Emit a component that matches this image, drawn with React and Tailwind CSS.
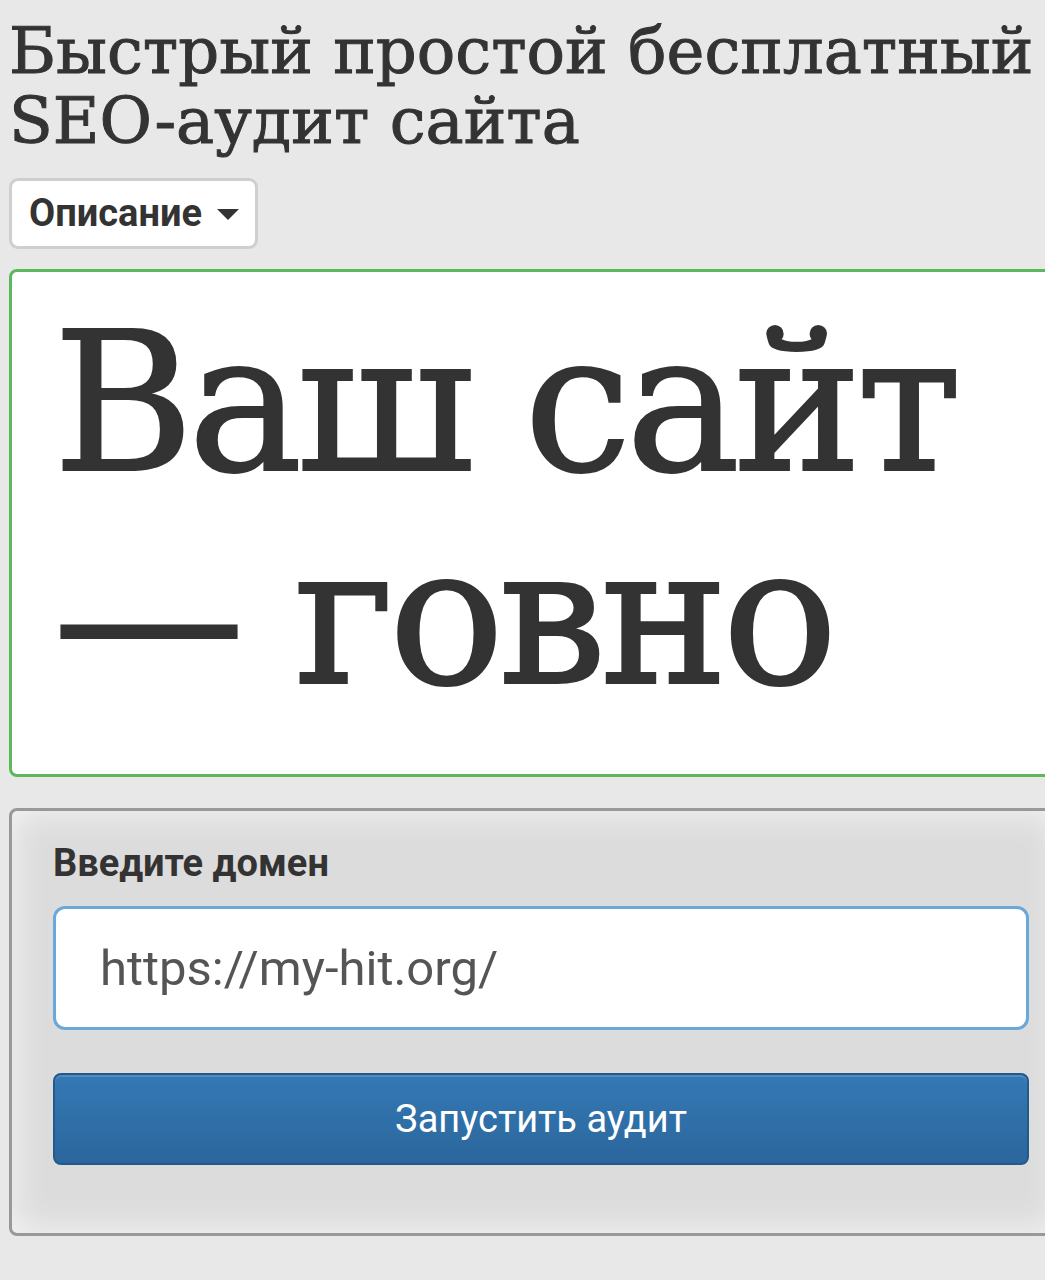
import React, { useState } from "react";

const serif = { fontFamily: '"DejaVu Serif", "Liberation Serif", serif' };

export default function App() {
  const [domain, setDomain] = useState("https://my-hit.org/");

  return (
    <div className="min-h-[1280px] w-full overflow-hidden bg-[#e8e8e8] text-[#333]" style={{ fontFamily: 'Roboto, "Liberation Sans", sans-serif' }}>
      <div className="w-[1063px] pl-[9px] pt-[16px]">
        <h1 className="m-0 text-[64px] leading-[70px] font-normal text-[#333] [-webkit-text-stroke:1px_#333]" style={serif}>
          Быстрый простой бесплатный SEO-аудит сайта
        </h1>

        <button className="mt-[22px] flex h-[71px] w-[249px] items-center gap-[15px] rounded-[9px] border-[3px] border-[#cfcfcf] bg-white pl-[17px] text-[38px] font-bold text-[#333]">
          Описание
          <span className="mt-[2px] h-0 w-0 border-x-[11px] border-t-[11px] border-x-transparent border-t-[#333]"></span>
        </button>

        <div className="mt-[20px] h-[508px] rounded-[8px] border-[3px] border-[#5cb85c] bg-white pl-[41px] pt-[25px]">
          <p className="m-0 text-[192px] leading-[213px] text-[#333] tracking-[-6px] [-webkit-text-stroke:2px_#333]" style={serif}>
            Ваш сайт — говно
          </p>
        </div>

        <div className="mt-[31px] h-[428px] rounded-[8px] border-[3px] border-[#999] bg-[#dcdcdc] px-[41px] pt-[30px] shadow-[inset_0_0_36px_rgba(255,255,255,0.75)]">
          <label className="block text-[38px] font-bold leading-[44px] text-[#333]">Введите домен</label>
          <input
            className="mt-[21px] block h-[124px] w-[976px] rounded-[12px] border-[3px] border-[#6aa8da] bg-white px-[44px] text-[49px] text-[#555] outline-none"
            value={domain}
            onChange={(e) => setDomain(e.target.value)}
          />
          <button className="mt-[43px] block h-[92px] w-[976px] rounded-[8px] border-2 border-[#245a8a] bg-gradient-to-b from-[#3479b5] to-[#2b669c] text-[38px] text-white shadow-[inset_0_2px_0_rgba(255,255,255,0.15)]">
            Запустить аудит
          </button>
        </div>
      </div>
    </div>
  );
}
